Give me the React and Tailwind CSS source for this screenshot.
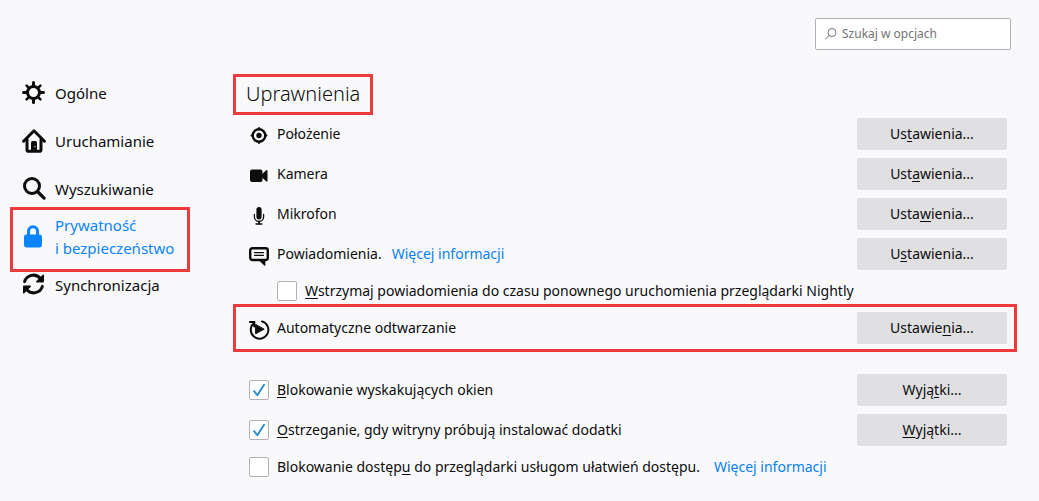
import React, { useState } from 'react';

const GearIcon = () => (
  <svg className="w-6 h-6 shrink-0" viewBox="0 0 24 24" fill="none" stroke="currentColor" strokeLinecap="round">
    <circle cx="11.5" cy="11.5" r="6" strokeWidth="3" />
    <path strokeWidth="3" d="M11.5 1.5v3M11.5 18.5v3M1.5 11.5h3M18.5 11.5h3" />
    <path strokeWidth="2.6" d="M4.6 4.6l2 2M16.4 16.4l2 2M4.6 18.4l2-2M16.4 6.6l2-2" />
  </svg>
);

const HomeIcon = () => (
  <svg className="w-6 h-6 shrink-0" viewBox="0 0 24 24" fill="none" stroke="currentColor" strokeLinecap="round" strokeLinejoin="round">
    <path strokeWidth="3" d="M1.6 12.2L12 1.8l10.4 10.4" />
    <path strokeWidth="3" d="M5 10.5v10.2q0 1.6 1.6 1.6h10.8q1.6 0 1.6-1.6V10.5" />
    <path fill="currentColor" stroke="none" d="M9 22v-8.5q0-1.5 1.5-1.5h3q1.5 0 1.5 1.5V22z" />
    <circle cx="13" cy="17.6" r="0.7" fill="#f9f9fb" stroke="none" />
  </svg>
);

const SearchIcon = () => (
  <svg className="w-6 h-6 shrink-0" viewBox="0 0 24 24" fill="none" stroke="currentColor" strokeLinecap="round">
    <circle cx="10" cy="9" r="7.5" strokeWidth="3" />
    <path strokeWidth="3.2" d="M15.5 14.5l6.6 6.6" />
  </svg>
);

const LockIcon = () => (
  <svg className="w-6 h-6 shrink-0" viewBox="0 0 24 24" fill="none" stroke="currentColor">
    <path strokeWidth="3" d="M6.5 11V6.2a4.5 4.5 0 0 1 9 0V11" />
    <rect x="2" y="9.5" width="18" height="13" rx="2.4" fill="currentColor" stroke="none" />
  </svg>
);

const SyncIcon = () => (
  <svg className="w-6 h-6 shrink-0" viewBox="0 0 24 24" fill="none" stroke="currentColor" strokeLinecap="round">
    <path strokeWidth="3" d="M2.6 8.6A9.2 9.2 0 0 1 18.2 5.2" />
    <path fill="currentColor" stroke="none" d="M22 2v6.6q0 .8-.8.8h-6.6q-1-.3-.4-1.1l6.5-6.5q1-.7 1.3.2z" />
    <path strokeWidth="3" d="M20.4 13.4A9.2 9.2 0 0 1 4.8 16.8" />
    <path fill="currentColor" stroke="none" d="M1 20v-6.6q0-.8.8-.8h6.6q1 .3.4 1.1l-6.5 6.5q-1 .7-1.3-.2z" />
  </svg>
);

const LocationIcon = () => (
  <svg className="w-5 h-5 shrink-0" viewBox="0 0 20 20" fill="none" stroke="currentColor" strokeLinecap="round">
    <circle cx="10" cy="11.5" r="6.3" strokeWidth="2.4" />
    <circle cx="10" cy="11.5" r="2.7" fill="currentColor" stroke="none" />
    <path strokeWidth="2" d="M10 4v1M10 18v1M2.5 11.5h1M16.5 11.5h1" />
  </svg>
);

const CameraIcon = () => (
  <svg className="w-5 h-5 shrink-0" viewBox="0 0 20 20" fill="currentColor">
    <rect x="1" y="5.5" width="12.5" height="12.5" rx="2" />
    <path d="M12.5 10.7l4.6-4.4q1.4-.9 1.4.6v9.8q0 1.5-1.4.6l-4.6-4.4z" />
  </svg>
);

const MicIcon = () => (
  <svg className="w-5 h-5 shrink-0 overflow-visible" viewBox="0 0 20 20" fill="none" stroke="currentColor" strokeLinecap="round">
    <rect x="7.4" y="3" width="5.2" height="12.4" rx="2.6" fill="currentColor" stroke="none" />
    <path strokeWidth="1.3" d="M5.4 10.4v2.4a4.6 4.6 0 0 0 9.2 0v-2.4" />
    <path strokeWidth="1.8" d="M10 17.6v2" />
    <path strokeWidth="1.6" d="M7.2 20h5.6" />
  </svg>
);

const NotificationIcon = () => (
  <svg className="w-5 h-5 shrink-0 overflow-visible" viewBox="0 0 20 20" fill="none" stroke="currentColor" strokeLinecap="round">
    <rect x="1.2" y="4.2" width="17.6" height="11.8" rx="2.2" strokeWidth="2.4" />
    <path strokeWidth="1.3" d="M5.5 8.7h9M5.5 11.3h9" />
    <path fill="currentColor" stroke="none" d="M9.5 16h6.8v5.2q0 1.2-1 .4z" />
  </svg>
);

const AutoplayIcon = () => (
  <svg className="w-5 h-5 shrink-0 overflow-visible" viewBox="0 0 20 20" fill="none" stroke="currentColor" strokeLinecap="round">
    <path strokeWidth="2" d="M13 3.4a8.8 8.8 0 1 1-8.2 1.8" />
    <path strokeWidth="2" d="M.9 4h4.4v4.4" />
    <path fill="currentColor" strokeWidth="1" strokeLinejoin="round" d="M6.6 6.8v9l8.2-4.5z" />
  </svg>
);

// Label with one underlined access key letter
const KeyText = ({ text, at }) => {
  if (at === undefined) return <>{text}</>;
  return (
    <>
      {text.slice(0, at)}
      <span className="underline underline-offset-2">{text[at]}</span>
      {text.slice(at + 1)}
    </>
  );
};

const SettingsButton = ({ text, at }) => (
  <button className="w-[150px] h-8 shrink-0 ml-auto rounded-xs bg-[#e0e0e2] hover:bg-[#d2d2d4] text-center">
    <KeyText text={text} at={at} />
  </button>
);

const MoreLink = () => (
  <a href="#info" className="ml-0.5 text-[#0a7ff5] hover:underline">Więcej informacji</a>
);

const Checkbox = ({ id, text, at, defaultChecked = false }) => (
  <div className="flex items-center gap-2">
    <span className="grid shrink-0">
      <input
        id={id}
        type="checkbox"
        defaultChecked={defaultChecked}
        className="peer col-start-1 row-start-1 appearance-none w-5 h-5 rounded-xs border border-[#b1b1b3] bg-white"
      />
      <svg
        className="col-start-1 row-start-1 w-5 h-5 pointer-events-none invisible peer-checked:visible text-[#2f8fc9]"
        viewBox="0 0 20 20"
        fill="none"
        stroke="currentColor"
        strokeWidth="2"
        strokeLinecap="round"
        strokeLinejoin="round"
      >
        <path d="M5 11.2l3.4 4L15 4.8" />
      </svg>
    </span>
    <label htmlFor={id}><KeyText text={text} at={at} /></label>
  </div>
);

const navItems = [
  { name: 'Ogólne', icon: GearIcon },
  { name: 'Uruchamianie', icon: HomeIcon },
  { name: 'Wyszukiwanie', icon: SearchIcon },
  { name: 'Prywatność i\u00a0bezpieczeństwo', icon: LockIcon, marked: true },
  { name: 'Synchronizacja', icon: SyncIcon },
];

const permissions = [
  { name: 'Położenie', icon: LocationIcon, at: 2 },
  { name: 'Kamera', icon: CameraIcon, at: 3 },
  { name: 'Mikrofon', icon: MicIcon, at: 4 },
  { name: 'Powiadomienia.', icon: NotificationIcon, at: 1, link: true },
];

const Sidebar = ({ active, onSelect }) => (
  <nav className="w-[233px] shrink-0 pl-[10px] pt-[19px] text-[15px] leading-[23px]">
    {navItems.map((item) => (
      <button
        key={item.name}
        onClick={() => onSelect(item.name)}
        className={`flex items-center gap-[9px] w-[180px] pl-[9px] text-left border-3 ${item.marked ? 'h-[65px] -mt-1.5 -mb-[11px] pb-1.5 border-[#ed3a3d]' : 'h-12 border-transparent'} ${active === item.name ? 'text-[#0a84ff]' : ''}`}
      >
        <item.icon />
        <span>{item.name}</span>
      </button>
    ))}
  </nav>
);

const App = () => {
  const [active, setActive] = useState(navItems[3].name);

  return (
    <div className="min-h-screen bg-[#f9f9fb] text-[#0c0c0d] font-['Noto_Sans',sans-serif] text-sm">
      <header className="flex justify-end pt-[18px] pr-7">
        <label className="flex items-center gap-1 w-[196px] h-8 px-2 bg-white border border-[#b1b1b3] rounded-xs text-[#737373]">
          <svg className="w-3.5 h-3.5 shrink-0" viewBox="0 0 14 14" fill="none" stroke="currentColor" strokeWidth="1">
            <circle cx="8" cy="5.5" r="4" />
            <path d="M5.2 8.4L1.2 12.2" />
          </svg>
          <input
            type="search"
            aria-label="Szukaj w opcjach"
            placeholder="Szukaj w opcjach"
            className="w-full min-w-0 text-xs outline-none placeholder:text-[#737373]"
          />
        </label>
      </header>

      <div className="flex">
        <Sidebar active={active} onSelect={setActive} />

        <main className="flex-1 min-w-0 pt-6 pr-[22px] pb-5">
          <h1 className="w-fit h-[41px] px-[10px] mb-[3px] border-3 border-[#ed3a3d] text-xl leading-[33px] font-light">
            Uprawnienia
          </h1>

          {/* Permissions */}
          <div className="flex flex-col gap-2 pl-4 pr-[10px]">
            {permissions.map((item) => (
              <div key={item.name} className="flex items-center gap-2 h-8">
                <item.icon />
                <span>{item.name}</span>
                {item.link && <MoreLink />}
                <SettingsButton text="Ustawienia..." at={item.at} />
              </div>
            ))}
            <div className="flex items-center h-[26px] pl-7">
              <Checkbox id="pause" text="Wstrzymaj powiadomienia do czasu ponownego uruchomienia przeglądarki Nightly" at={0} />
            </div>
          </div>

          <div className="flex items-center gap-2 h-12 pl-[13px] pr-[7px] border-3 border-[#ed3a3d]">
            <AutoplayIcon />
            <span>Automatyczne odtwarzanie</span>
            <SettingsButton text="Ustawienia..." at={7} />
          </div>

          {/* Blocking options */}
          <div className="flex flex-col gap-2 mt-[22px] pl-4 pr-[10px]">
            <div className="flex items-center h-8">
              <Checkbox id="popups" text="Blokowanie wyskakujących okien" at={0} defaultChecked />
              <SettingsButton text="Wyjątki..." at={4} />
            </div>
            <div className="flex items-center h-8">
              <Checkbox id="addons" text="Ostrzeganie, gdy witryny próbują instalować dodatki" at={0} defaultChecked />
              <SettingsButton text="Wyjątki..." at={0} />
            </div>
            <div className="flex items-center gap-3 h-[26px]">
              <Checkbox id="a11y" text="Blokowanie dostępu do przeglądarki usługom ułatwień dostępu." at={17} />
              <MoreLink />
            </div>
          </div>
        </main>
      </div>
    </div>
  );
};

export default App;
